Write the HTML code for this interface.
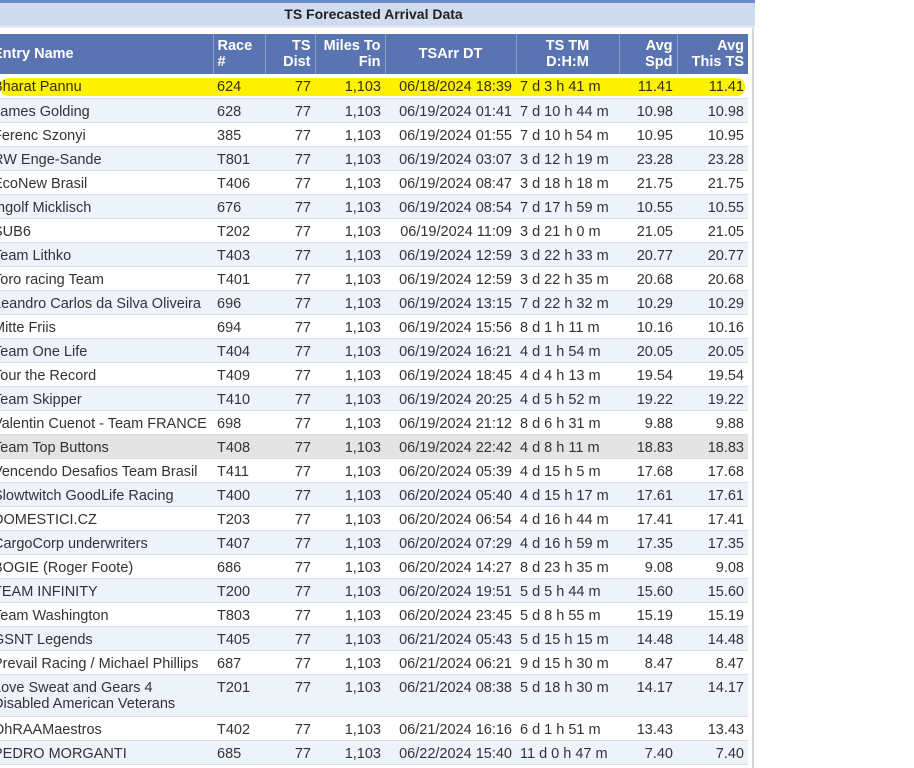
<!DOCTYPE html>
<html><head><meta charset="utf-8"><style>
body{margin:0;width:914px;height:762px;overflow:hidden;background:#fff;font-family:"Liberation Sans",Arial,sans-serif;position:relative}
.top{position:absolute;left:0;top:0;width:755px;height:3px;background:#6b8cc4}
.title{position:absolute;left:0;top:3px;width:755px;height:25px;background:#cfdcee;font-weight:bold;font-size:14px;color:#222;text-align:center;line-height:22px;border-bottom:2px solid #e3e8ee;box-sizing:border-box}
.title span{position:relative;left:-4px}
.cont{position:absolute;left:0;top:28px;width:752px;height:740px;border-right:2px solid #d6d6d6}
table{position:absolute;left:-11px;top:34px;width:759px;border-collapse:collapse;font-size:14.5px;color:#333;table-layout:fixed}
th{background:#5a74b1;color:#fff;font-size:14.5px;font-weight:bold;text-align:right;line-height:16px;height:40px;border-left:1px solid #8ea0c8;padding:0 4px;vertical-align:middle;box-sizing:border-box;white-space:nowrap}
th:first-child{text-align:left;border-left:none}
td{height:24px;padding:0 4px;border-bottom:1px solid #d8dde6;white-space:nowrap;text-align:right;box-sizing:border-box;line-height:16px;vertical-align:top;padding-top:5px;overflow:hidden}
td:first-child,td:nth-child(2){text-align:left}
tr:nth-child(odd) td{background:#eef2f9}
tr.w td{background:#fff}
tr.g td{background:#e4e4e4}
.hl{position:absolute;left:0;top:78px;width:745px;height:18px;background:#fff200;border-radius:8px;mix-blend-mode:multiply;z-index:2}
</style></head><body>
<div class="top"></div>
<div class="title"><span>TS Forecasted Arrival Data</span></div>
<div class="cont"></div>
<div class="hl"></div>
<table>
<colgroup><col style="width:224px"><col style="width:52px"><col style="width:50px"><col style="width:70px"><col style="width:131px"><col style="width:103px"><col style="width:58px"><col style="width:71px"></colgroup>
<tr><th>Entry Name</th><th style="text-align:left">Race<br>#</th><th>TS<br>Dist</th><th>Miles To<br>Fin</th><th style="text-align:center">TSArr DT</th><th style="text-align:center">TS TM<br>D:H:M</th><th>Avg<br>Spd</th><th>Avg<br>This TS</th></tr>
<tr class="w"><td>Bharat Pannu</td><td>624</td><td>77</td><td>1,103</td><td>06/18/2024 18:39</td><td style="text-align:left">7 d 3 h 41 m</td><td>11.41</td><td>11.41</td></tr>
<tr><td>James Golding</td><td>628</td><td>77</td><td>1,103</td><td>06/19/2024 01:41</td><td style="text-align:left">7 d 10 h 44 m</td><td>10.98</td><td>10.98</td></tr>
<tr class="w"><td>Ferenc Szonyi</td><td>385</td><td>77</td><td>1,103</td><td>06/19/2024 01:55</td><td style="text-align:left">7 d 10 h 54 m</td><td>10.95</td><td>10.95</td></tr>
<tr><td>RW Enge-Sande</td><td>T801</td><td>77</td><td>1,103</td><td>06/19/2024 03:07</td><td style="text-align:left">3 d 12 h 19 m</td><td>23.28</td><td>23.28</td></tr>
<tr class="w"><td>EcoNew Brasil</td><td>T406</td><td>77</td><td>1,103</td><td>06/19/2024 08:47</td><td style="text-align:left">3 d 18 h 18 m</td><td>21.75</td><td>21.75</td></tr>
<tr><td>Ingolf Micklisch</td><td>676</td><td>77</td><td>1,103</td><td>06/19/2024 08:54</td><td style="text-align:left">7 d 17 h 59 m</td><td>10.55</td><td>10.55</td></tr>
<tr class="w"><td>SUB6</td><td>T202</td><td>77</td><td>1,103</td><td>06/19/2024 11:09</td><td style="text-align:left">3 d 21 h 0 m</td><td>21.05</td><td>21.05</td></tr>
<tr><td>Team Lithko</td><td>T403</td><td>77</td><td>1,103</td><td>06/19/2024 12:59</td><td style="text-align:left">3 d 22 h 33 m</td><td>20.77</td><td>20.77</td></tr>
<tr class="w"><td>Toro racing Team</td><td>T401</td><td>77</td><td>1,103</td><td>06/19/2024 12:59</td><td style="text-align:left">3 d 22 h 35 m</td><td>20.68</td><td>20.68</td></tr>
<tr><td>Leandro Carlos da Silva Oliveira</td><td>696</td><td>77</td><td>1,103</td><td>06/19/2024 13:15</td><td style="text-align:left">7 d 22 h 32 m</td><td>10.29</td><td>10.29</td></tr>
<tr class="w"><td>Mitte Friis</td><td>694</td><td>77</td><td>1,103</td><td>06/19/2024 15:56</td><td style="text-align:left">8 d 1 h 11 m</td><td>10.16</td><td>10.16</td></tr>
<tr><td>Team One Life</td><td>T404</td><td>77</td><td>1,103</td><td>06/19/2024 16:21</td><td style="text-align:left">4 d 1 h 54 m</td><td>20.05</td><td>20.05</td></tr>
<tr class="w"><td>Tour the Record</td><td>T409</td><td>77</td><td>1,103</td><td>06/19/2024 18:45</td><td style="text-align:left">4 d 4 h 13 m</td><td>19.54</td><td>19.54</td></tr>
<tr><td>Team Skipper</td><td>T410</td><td>77</td><td>1,103</td><td>06/19/2024 20:25</td><td style="text-align:left">4 d 5 h 52 m</td><td>19.22</td><td>19.22</td></tr>
<tr class="w"><td>Valentin Cuenot - Team FRANCE</td><td>698</td><td>77</td><td>1,103</td><td>06/19/2024 21:12</td><td style="text-align:left">8 d 6 h 31 m</td><td>9.88</td><td>9.88</td></tr>
<tr class="g"><td>Team Top Buttons</td><td>T408</td><td>77</td><td>1,103</td><td>06/19/2024 22:42</td><td style="text-align:left">4 d 8 h 11 m</td><td>18.83</td><td>18.83</td></tr>
<tr class="w"><td>Vencendo Desafios Team Brasil</td><td>T411</td><td>77</td><td>1,103</td><td>06/20/2024 05:39</td><td style="text-align:left">4 d 15 h 5 m</td><td>17.68</td><td>17.68</td></tr>
<tr><td>Slowtwitch GoodLife Racing</td><td>T400</td><td>77</td><td>1,103</td><td>06/20/2024 05:40</td><td style="text-align:left">4 d 15 h 17 m</td><td>17.61</td><td>17.61</td></tr>
<tr class="w"><td>DOMESTICI.CZ</td><td>T203</td><td>77</td><td>1,103</td><td>06/20/2024 06:54</td><td style="text-align:left">4 d 16 h 44 m</td><td>17.41</td><td>17.41</td></tr>
<tr><td>CargoCorp underwriters</td><td>T407</td><td>77</td><td>1,103</td><td>06/20/2024 07:29</td><td style="text-align:left">4 d 16 h 59 m</td><td>17.35</td><td>17.35</td></tr>
<tr class="w"><td>BOGIE (Roger Foote)</td><td>686</td><td>77</td><td>1,103</td><td>06/20/2024 14:27</td><td style="text-align:left">8 d 23 h 35 m</td><td>9.08</td><td>9.08</td></tr>
<tr><td>TEAM INFINITY</td><td>T200</td><td>77</td><td>1,103</td><td>06/20/2024 19:51</td><td style="text-align:left">5 d 5 h 44 m</td><td>15.60</td><td>15.60</td></tr>
<tr class="w"><td>Team Washington</td><td>T803</td><td>77</td><td>1,103</td><td>06/20/2024 23:45</td><td style="text-align:left">5 d 8 h 55 m</td><td>15.19</td><td>15.19</td></tr>
<tr><td>GSNT Legends</td><td>T405</td><td>77</td><td>1,103</td><td>06/21/2024 05:43</td><td style="text-align:left">5 d 15 h 15 m</td><td>14.48</td><td>14.48</td></tr>
<tr class="w"><td>Prevail Racing / Michael Phillips</td><td>687</td><td>77</td><td>1,103</td><td>06/21/2024 06:21</td><td style="text-align:left">9 d 15 h 30 m</td><td>8.47</td><td>8.47</td></tr>
<tr><td style="height:42px;white-space:normal">Love Sweat and Gears 4 Disabled American Veterans</td><td>T201</td><td>77</td><td>1,103</td><td>06/21/2024 08:38</td><td style="text-align:left">5 d 18 h 30 m</td><td>14.17</td><td>14.17</td></tr>
<tr class="w"><td>OhRAAMaestros</td><td>T402</td><td>77</td><td>1,103</td><td>06/21/2024 16:16</td><td style="text-align:left">6 d 1 h 51 m</td><td>13.43</td><td>13.43</td></tr>
<tr><td>PEDRO MORGANTI</td><td>685</td><td>77</td><td>1,103</td><td>06/22/2024 15:40</td><td style="text-align:left">11 d 0 h 47 m</td><td>7.40</td><td>7.40</td></tr>
</table>
</body></html>
